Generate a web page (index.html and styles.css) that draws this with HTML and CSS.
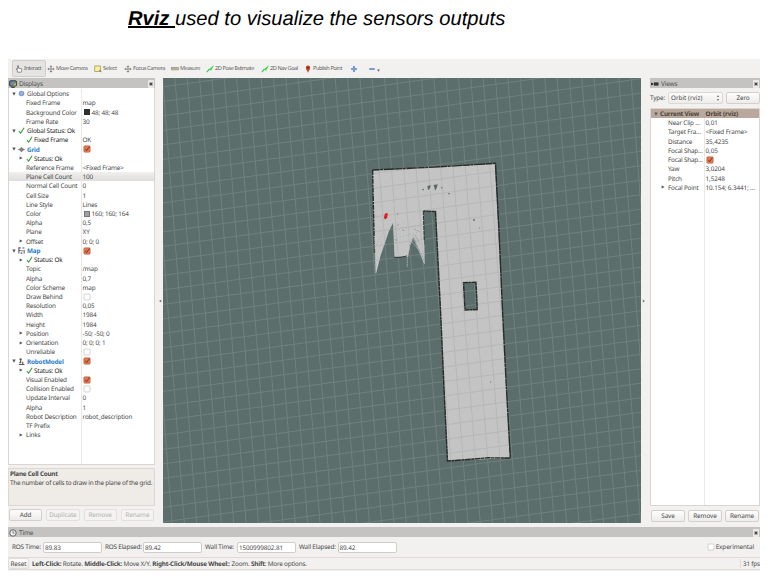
FILE: index.html
```html
<!DOCTYPE html>
<html lang="en">
<head>
<meta charset="utf-8">
<title>Rviz</title>
<link rel="stylesheet" href="styles.css">
</head>
<body>
<svg class="defs" width="0" height="0">
  <symbol id="tick" viewBox="0 0 8 8"><path d="M1 4.6 3 7 7 .8" fill="none" stroke="#2f9a35" stroke-width="1.2"/></symbol>
  <symbol id="checked" viewBox="0 0 8 8"><rect x=".8" y=".8" width="6.4" height="6.4" rx="1" fill="#e2764f" stroke="#b96a4e" stroke-width=".6"/><path d="M2.2 3.8 3.6 5.6 6.4 1.6" fill="none" stroke="#7a3a26" stroke-width="1"/></symbol>
  <symbol id="unchecked" viewBox="0 0 8 8"><rect x="1" y="1" width="6" height="6" rx="1" fill="#fff" stroke="#c4c0bc" stroke-width=".7"/></symbol>
  <symbol id="down" viewBox="0 0 4 4"><path d="M.3 .6H3.7L2 3.7z" fill="#555"/></symbol>
  <symbol id="right" viewBox="0 0 4 4"><path d="M.6 .4V3.6L3.6 2z" fill="#555"/></symbol>
  <symbol id="cross4" viewBox="0 0 10 10"><path d="M5 .3 7 2.6H3zM5 9.7 7 7.4H3zM.3 5 2.6 3V7zM9.7 5 7.4 3V7z" fill="#8a8a8a"/><path d="M5 2V8M2 5H8" stroke="#8a8a8a" stroke-width="1.2"/></symbol>
  <symbol id="arrow" viewBox="0 0 10 10"><path d="M1 9 4.2 5.2" stroke="#35c94a" stroke-width="1.3"/><path d="M3 6.2 9.4 .8 6.2 6.8 5 5.6z" fill="#2fdc48" stroke="#35c94a" stroke-width=".5"/></symbol>
  <symbol id="shut" viewBox="0 0 6 8"><rect width="6" height="8" rx="1" fill="#eceae8"/><path d="M1.6 2.6 4.4 5.4M4.4 2.6 1.6 5.4" stroke="#444" stroke-width="1.3"/></symbol>
</svg>
<h1 class="caption"><b>Rviz </b>used to visualize the sensors outputs</h1>
<main class="window">
  <nav class="toolbar">
    <span class="tool active"><svg class="ti" viewBox="0 0 10 10"><path d="M3 9V6.8L1.2 5.2 2 4.6 3.2 5.4V1H4.4V4L8.4 4.8V7.2L7.6 9z" fill="#fff" stroke="#555" stroke-width=".8"/></svg>Interact</span>
    <span class="tool t-move"><svg class="ti"><use href="#cross4"/></svg>Move Camera</span>
    <span class="tool t-select"><svg class="ti" viewBox="0 0 10 10"><rect x="1" y="1.2" width="7" height="7" fill="#f8f2a0" stroke="#8a8446" stroke-width=".8"/><path d="M6.5 6.5 9.4 8.6" stroke="#555" stroke-width="1"/></svg>Select</span>
    <span class="tool t-focus"><svg class="ti"><use href="#cross4"/></svg>Focus Camera</span>
    <span class="tool t-measure"><svg class="ti" viewBox="0 0 10 10"><rect x=".5" y="3.2" width="9" height="3" fill="#c9c09a" stroke="#8a8676" stroke-width=".7"/><path d="M2.5 3V5M4.5 3V5M6.5 3V5" stroke="#777" stroke-width=".5"/></svg>Measure</span>
    <span class="tool t-pose"><svg class="ti"><use href="#arrow"/></svg>2D Pose Estimate</span>
    <span class="tool t-nav"><svg class="ti"><use href="#arrow"/></svg>2D Nav Goal</span>
    <span class="tool t-publish"><svg class="ti" viewBox="0 0 10 10"><path d="M5 9.8C4.4 7 2.2 5.6 2.2 3.3A2.8 2.8 0 0 1 7.8 3.3C7.8 5.6 5.6 7 5 9.8z" fill="#bb4a34"/><circle cx="5" cy="3.2" r="1.1" fill="#5e2a22"/></svg>Publish Point</span>
    <span class="tool t-plus"><svg class="ti" viewBox="0 0 10 10"><path d="M5 1.6V8.4M1.6 5H8.4" stroke="#5b87c4" stroke-width="2.6"/><path d="M5 2.4V7.6M2.4 5H7.6" stroke="#8fb2e0" stroke-width="1"/></svg></span>
    <span class="tool t-minus"><svg class="ti" viewBox="0 0 10 10"><path d="M1.6 5H8.4" stroke="#5b87c4" stroke-width="2"/></svg><svg class="caret"><use href="#down"/></svg></span>
  </nav>

  <div class="middle">
    <aside class="displays">
      <header class="bar"><svg class="bi" viewBox="0 0 10 10"><rect x=".8" y="1" width="8.4" height="6.6" rx=".8" fill="#6d8d9b" stroke="#333" stroke-width="1.2"/><path d="M3 9.3H7" stroke="#333" stroke-width="1.2"/><path d="M5 6.6 8.4 3.4V6.8z" fill="#d8c544"/></svg>Displays<svg class="close"><use href="#shut"/></svg></header>
      <div class="tree">
        <div class="row"><span class="k l0"><svg class="tw"><use href="#down"/></svg><svg class="ic" viewBox="0 0 8 8"><circle cx="4" cy="4" r="3.2" fill="#7f9bd0"/><circle cx="4" cy="4" r="1.6" fill="#9db4e0"/></svg>Global Options</span><span class="v"></span></div>
        <div class="row"><span class="k l1">Fixed Frame</span><span class="v">map</span></div>
        <div class="row"><span class="k l1">Background Color</span><span class="v"><i class="swatch dark"></i>48; 48; 48</span></div>
        <div class="row"><span class="k l1">Frame Rate</span><span class="v">30</span></div>
        <div class="row dk"><span class="k l0"><svg class="tw"><use href="#down"/></svg><svg class="ic"><use href="#tick"/></svg>Global Status: Ok</span><span class="v"></span></div>
        <div class="row dk"><span class="k l1"><svg class="ic"><use href="#tick"/></svg>Fixed Frame</span><span class="v lt">OK</span></div>
        <div class="row"><span class="k l0 name"><svg class="tw"><use href="#down"/></svg><svg class="ic" viewBox="0 0 8 8"><path d="M4 1 7.6 4 4 7 .4 4z" fill="#8d8d8d"/><path d="M0 4H8M4 1.5V6.5" stroke="#777" stroke-width=".6"/></svg>Grid</span><span class="v"><svg class="cb"><use href="#checked"/></svg></span></div>
        <div class="row dk"><span class="k l1 sub"><svg class="tw"><use href="#right"/></svg><svg class="ic"><use href="#tick"/></svg>Status: Ok</span><span class="v"></span></div>
        <div class="row"><span class="k l1">Reference Frame</span><span class="v">&lt;Fixed Frame&gt;</span></div>
        <div class="row selected"><span class="k l1">Plane Cell Count</span><span class="v">100</span></div>
        <div class="row"><span class="k l1">Normal Cell Count</span><span class="v">0</span></div>
        <div class="row"><span class="k l1">Cell Size</span><span class="v">1</span></div>
        <div class="row"><span class="k l1">Line Style</span><span class="v">Lines</span></div>
        <div class="row"><span class="k l1">Color</span><span class="v"><i class="swatch grey"></i>160; 160; 164</span></div>
        <div class="row"><span class="k l1">Alpha</span><span class="v">0,5</span></div>
        <div class="row"><span class="k l1">Plane</span><span class="v">XY</span></div>
        <div class="row"><span class="k l1 sub"><svg class="tw"><use href="#right"/></svg>Offset</span><span class="v">0; 0; 0</span></div>
        <div class="row"><span class="k l0 name"><svg class="tw"><use href="#down"/></svg><svg class="ic" viewBox="0 0 8 8"><path d="M1 7.5V1H3M5 1.2H7.4M1 4H3M4.6 3.4V5M7 3.4V7.5M3 7H5" fill="none" stroke="#555" stroke-width="1.2"/></svg>Map</span><span class="v"><svg class="cb"><use href="#checked"/></svg></span></div>
        <div class="row dk"><span class="k l1 sub"><svg class="tw"><use href="#right"/></svg><svg class="ic"><use href="#tick"/></svg>Status: Ok</span><span class="v"></span></div>
        <div class="row"><span class="k l1">Topic</span><span class="v">/map</span></div>
        <div class="row"><span class="k l1">Alpha</span><span class="v">0,7</span></div>
        <div class="row"><span class="k l1">Color Scheme</span><span class="v">map</span></div>
        <div class="row"><span class="k l1">Draw Behind</span><span class="v"><svg class="cb"><use href="#unchecked"/></svg></span></div>
        <div class="row"><span class="k l1">Resolution</span><span class="v">0,05</span></div>
        <div class="row"><span class="k l1">Width</span><span class="v">1984</span></div>
        <div class="row"><span class="k l1">Height</span><span class="v">1984</span></div>
        <div class="row"><span class="k l1 sub"><svg class="tw"><use href="#right"/></svg>Position</span><span class="v">-50; -50; 0</span></div>
        <div class="row"><span class="k l1 sub"><svg class="tw"><use href="#right"/></svg>Orientation</span><span class="v">0; 0; 0; 1</span></div>
        <div class="row"><span class="k l1">Unreliable</span><span class="v"><svg class="cb"><use href="#unchecked"/></svg></span></div>
        <div class="row"><span class="k l0 name"><svg class="tw"><use href="#down"/></svg><svg class="ic" viewBox="0 0 8 8"><circle cx="3" cy="1.6" r="1.3" fill="#555"/><path d="M3 2.5V6M1 7.4H7.4M5.4 4.4V7M1.6 5.6 3 4.4" fill="none" stroke="#555" stroke-width="1.3"/></svg>RobotModel</span><span class="v"><svg class="cb"><use href="#checked"/></svg></span></div>
        <div class="row dk"><span class="k l1 sub"><svg class="tw"><use href="#right"/></svg><svg class="ic"><use href="#tick"/></svg>Status: Ok</span><span class="v"></span></div>
        <div class="row"><span class="k l1">Visual Enabled</span><span class="v"><svg class="cb"><use href="#checked"/></svg></span></div>
        <div class="row"><span class="k l1">Collision Enabled</span><span class="v"><svg class="cb"><use href="#unchecked"/></svg></span></div>
        <div class="row"><span class="k l1">Update Interval</span><span class="v">0</span></div>
        <div class="row"><span class="k l1">Alpha</span><span class="v">1</span></div>
        <div class="row"><span class="k l1">Robot Description</span><span class="v">robot_description</span></div>
        <div class="row"><span class="k l1">TF Prefix</span><span class="v"></span></div>
        <div class="row"><span class="k l1 sub"><svg class="tw"><use href="#right"/></svg>Links</span><span class="v"></span></div>
        <div class="row fill"><span class="k"></span><span class="v"></span></div>
      </div>
      <div class="help"><b>Plane Cell Count</b><p>The number of cells to draw in the plane of the grid.</p></div>
      <div class="buttons"><span class="btn">Add</span><span class="btn off">Duplicate</span><span class="btn off">Remove</span><span class="btn off">Rename</span></div>
    </aside>
    <div class="splitter"><svg viewBox="0 0 4 4"><path d="M3.2 .6V3.4L1 2z" fill="#777"/></svg></div>
    <svg class="view" viewBox="163 78 478 445" preserveAspectRatio="none">
      <defs>
        <path id="lines"/>
        <path id="area" clip-rule="evenodd" fill-rule="evenodd" d="M372.6 170 495 163.5 502 300 510 458 447.5 461 441 320 435.5 211H423.3L424.5 264.5 413.5 237 410 246 408 257H394.5L393 223 389 231 380.5 256 376 274 373.5 222zM463.5 282.6L476 282.3 477.3 309.5 465 310z"/>
        <clipPath id="floor"><use href="#area"/></clipPath>
      </defs>
      <rect x="163" y="78" width="478" height="445" fill="#5c6e6b"/>
      <use href="#lines" stroke="#6f807d" stroke-width="1"/>
      <use href="#area" fill="#c4c4c4"/>
      <g clip-path="url(#floor)"><use href="#lines" stroke="#b6b7b7" stroke-width="1"/></g>
      <g fill="none" stroke="#262a29" stroke-width="1.4">
        <path d="M372.6 170 410 168.3 447 166.4 495.5 163.3 499 232 502 300 506 380 510.3 458" stroke-dasharray="7 .5 3 .7 11 .4"/>
        <path d="M510.3 458 488 457.8 468 459.5 447.5 461 444 388 440.5 310 435.5 211.5 423.5 211" stroke-dasharray="6 .4 3 .5"/>
        <path d="M423.3 211 424.3 240" stroke-dasharray="4 1" stroke-width=".9"/>
        <path d="M372.6 170 373.7 220 374.5 253" stroke-dasharray="5 1 2 .7"/>
        <path d="M463.5 282.6 476 282.3 477.3 309.5 465 310z" stroke-dasharray="5 .4 2 .5"/>
        <path d="M394 257.4 401 257.2 407 256" stroke-width=".9"/>
      </g>
      <path d="M374.5 236 375.7 273M376.5 268 380 254M407.3 256V267M413 237 424.6 264M412 242 418 249M424.3 245V262" fill="none" stroke="#bfc4c3" stroke-width=".7" stroke-dasharray="1.5 .5"/>
      <path d="M376 245 384 232M409.5 246 413 234 421 255M395 226V252M396 230 420 226M397 238 418 232" fill="none" stroke="#828b89" stroke-width=".6" stroke-dasharray=".7 2.6"/>
      <path d="M412.5 238 417 243M415 235 420 244M417 245 424 261M414 229 420 232M397 225H399M397.7 213V215M402 230 405 231M395 240H397" fill="none" stroke="#8b9391" stroke-width=".8" stroke-dasharray="2 1"/>
      <g fill="#5c6765"><path d="M427.3 186 430.8 185.3 429.8 188.5 428.2 190.2zM433.5 185 437.7 184.3 436.7 188 435 190.7 434.3 187z"/><circle cx="423" cy="189.6" r=".8"/><circle cx="441.8" cy="187.7" r=".7"/><circle cx="449" cy="193.7" r=".8"/><circle cx="474" cy="220" r=".9"/><circle cx="479.3" cy="228" r=".5"/><circle cx="490.5" cy="382" r=".6"/></g>
      <path d="M385 213.5 387.7 213 387.3 217.5 385.4 219.5 383.8 218z" fill="#e31b20"/>
    </svg>
    <div class="splitter rs"><svg viewBox="0 0 4 4"><path d="M.8 .6V3.4L3 2z" fill="#777"/></svg></div>
    <aside class="views">
      <header class="bar"><svg class="bi" viewBox="0 0 10 10"><rect x="3.6" y="3" width="5.8" height="4" fill="#333"/><path d="M0 3 3 4.4V5.6L0 7z" fill="#333"/></svg>Views<svg class="close"><use href="#shut"/></svg></header>
      <div class="type"><span>Type:</span><span class="select">Orbit (rviz)<svg viewBox="0 0 4 8"><path d="M.8 3 2 1 3.2 3zM.8 5 2 7 3.2 5z" fill="#777"/></svg></span><span class="btn">Zero</span></div>
      <div class="tree">
        <div class="row head"><span class="k"><svg class="tw"><use href="#down"/></svg>Current View</span><span class="v">Orbit (rviz)</span></div>
        <div class="row"><span class="k l1">Near Clip ...</span><span class="v">0,01</span></div>
        <div class="row"><span class="k l1">Target Fra...</span><span class="v">&lt;Fixed Frame&gt;</span></div>
        <div class="row"><span class="k l1">Distance</span><span class="v">35,4235</span></div>
        <div class="row"><span class="k l1">Focal Shap...</span><span class="v">0,05</span></div>
        <div class="row"><span class="k l1">Focal Shap...</span><span class="v"><svg class="cb"><use href="#checked"/></svg></span></div>
        <div class="row"><span class="k l1">Yaw</span><span class="v">3,0204</span></div>
        <div class="row"><span class="k l1">Pitch</span><span class="v">1,5248</span></div>
        <div class="row"><span class="k l1 sub"><svg class="tw"><use href="#right"/></svg>Focal Point</span><span class="v">10.154; 6.3441; ...</span></div>
        <div class="row fill"><span class="k"></span><span class="v"></span></div>
      </div>
      <div class="buttons"><span class="btn">Save</span><span class="btn">Remove</span><span class="btn">Rename</span></div>
    </aside>
  </div>

  <section class="time">
    <header class="bar"><svg class="bi" viewBox="0 0 10 10"><circle cx="5" cy="5" r="4" fill="#f4f4f4" stroke="#444" stroke-width="1"/><path d="M5 2.4V5.2H7.2" fill="none" stroke="#444" stroke-width=".8"/></svg>Time<svg class="close"><use href="#shut"/></svg></header>
    <div class="clocks">
      <label class="c1">ROS Time:</label><span class="field">89.83</span>
      <label class="c2">ROS Elapsed:</label><span class="field">89.42</span>
      <label class="c3">Wall Time:</label><span class="field">1500999802.81</span>
      <label class="c4">Wall Elapsed:</label><span class="field">89.42</span>
      <span class="exp"><svg class="cb"><use href="#unchecked"/></svg>Experimental</span>
    </div>
  </section>
  <footer class="status"><span class="btn">Reset</span><p><b>Left-Click:</b> Rotate. <b>Middle-Click:</b> Move X/Y. <b>Right-Click/Mouse Wheel:</b>: Zoom. <b>Shift</b>: More options.</p><span class="fps">31 fps</span></footer>
</main>
<script src="grid.js"></script>
</body>
</html>
```
FILE: styles.css
```css
* { box-sizing: border-box; }
body {
  margin: 0;
  width: 770px;
  height: 576px;
  overflow: hidden;
  background: #fff;
  font: 6.35px/9.22px "Noto Sans", "Open Sans", sans-serif;
  letter-spacing: -.18px;
  color: #484848;
  text-rendering: geometricPrecision;
}
p { margin: 0; }
i { font-style: normal; }
svg { display: block; flex: none; }
.defs { position: absolute; }

.caption {
  margin: 0;
  height: 59px;
  padding: 8px 0 0 128px;
  font: italic 20.15px/23px "Liberation Sans", Arial, sans-serif;
  letter-spacing: 0;
  color: #000;
  white-space: pre;
}
.caption b { text-decoration: underline; text-decoration-thickness: 2px; }

.window {
  width: 752px;
  height: 512px;
  margin-left: 8px;
  display: flex;
  flex-direction: column;
  background: #f2f1f0;
}

.toolbar { height: 19px; display: flex; align-items: center; padding-left: 4px; color: #5c5c5c; font-size: 5.6px; letter-spacing: -.42px; }
.tool { flex: none; display: flex; align-items: center; gap: 1px; height: 17px; padding-top: 1px; white-space: nowrap; }
.tool.active { width: 34px; padding-left: 2px; background: #e6e4e2; border: 1px solid #cfccc9; border-radius: 2px; }
.ti { width: 8px; height: 8px; }
.t-move { width: 46px; margin-left: 1px; }
.t-select { width: 30px; margin-left: 1px; letter-spacing: -.3px; }
.t-focus { width: 47px; }
.t-measure { width: 35px; }
.t-pose { width: 55px; }
.t-nav { width: 43px; }
.t-publish { width: 46px; }
.t-plus { width: 18px; }
.caret { width: 3px; height: 3px; margin-top: 3px; }

.middle { display: flex; height: 445px; }
.displays { width: 147px; display: flex; flex-direction: column; }
.bar {
  height: 10px;
  flex: none;
  display: flex;
  align-items: center;
  gap: 2px;
  padding: 1px 1px 0;
  background: #c5c3c2;
  color: #505050;
  font-size: 6.5px;
}
.bi { width: 8px; height: 8px; }
.close { margin-left: auto; width: 6px; height: 8px; }

.tree { background: #fff; border: 1px solid #d9d5d1; border-top: 0; display: flex; flex-direction: column; }
.displays .tree { height: 377px; padding-top: 1.2px; }
.row { height: 9.22px; flex: none; display: flex; white-space: nowrap; }
.row.fill { flex: 1; }
.k { width: 73px; padding-left: 17px; display: flex; align-items: center; border-right: 1px solid #ebe9e7; }
.v { flex: 1; padding-left: .6px; display: flex; align-items: center; overflow: hidden; }
.l0 { padding-left: 3px; }
.sub { padding-left: 10px; }
.sub .tw { margin-right: 3px; }
.tw { width: 4px; height: 4px; margin-right: 2px; }
.ic { width: 7px; height: 7px; margin-right: 2px; }
.l1 .ic { margin-right: 1px; }
.dk { color: #1e1e1e; }
.lt { color: #4c4c4c; }
.name { color: #2a7cc9; font-weight: bold; }
.cb { width: 8px; height: 8px; }
.selected { background: linear-gradient(#f1f0ef, #dfdddb); }
.swatch { width: 6px; height: 6px; margin: 0 2px 0 1px; }
.dark { background: #303030; }
.grey { background: #a0a0a4; border: .5px solid #777; }

.help { height: 38px; margin-top: 3px; padding: 1px 1px; background: #efebe7; border: 1px solid #dcd8d3; white-space: nowrap; line-height: 8.6px; letter-spacing: -.235px; }
.help b { display: block; }
.buttons { display: flex; gap: 4px; padding: 3px 1px 0; }
.btn {
  flex: 1;
  height: 12px;
  display: flex;
  align-items: center;
  justify-content: center;
  background: linear-gradient(#fdfdfd, #eeecea);
  border: 1px solid #d2cfcc;
  border-radius: 2px;
  letter-spacing: -.08px;
}
.btn.off { color: #b3b0ad; background: #f4f3f2; border-color: #e3e0de; }

.splitter { width: 8px; display: flex; align-items: center; justify-content: flex-end; padding-right: 1px; }
.splitter svg { width: 4px; height: 4px; }
.splitter.rs { width: 9px; justify-content: flex-start; padding: 0 0 0 1px; }
.view { width: 478px; height: 445px; overflow: hidden; }

.views { width: 110px; display: flex; flex-direction: column; }
.type { display: flex; align-items: center; height: 20px; }
.type > span:first-child { width: 18px; }
.select { width: 55px; height: 12px; padding: 0 2px; display: flex; align-items: center; justify-content: space-between; background: linear-gradient(#fdfdfd, #eeecea); border: 1px solid #dbd8d5; border-radius: 2px; letter-spacing: 0; }
.select svg { width: 4px; height: 8px; }
.type .btn { margin-left: 3px; }
.views .tree { height: 398px; border-top: 1px solid #d9d5d1; }
.views .k { width: 54px; }
.views .v { letter-spacing: -.12px; }
.views .l1 { padding-left: 17px; }
.views .sub { padding-left: 10px; }
.views .head { background: #b9a89b; color: #4b3f38; font-weight: bold; }
.views .head .k { padding-left: 3px; border-color: transparent; }
.views .buttons { gap: 3px; padding-top: 4px; }

.time { margin-top: 4px; }
.clocks { height: 20px; display: flex; align-items: center; padding: 0 6px 0 4px; }
.clocks label { white-space: nowrap; }
.c1 { width: 31px; }
.c2 { width: 38px; }
.c3 { width: 32px; }
.c4 { width: 38.5px; }
.field { width: 59px; height: 11px; margin-right: 3px; padding-left: 1px; background: #fff; border: 1px solid #cfccc9; border-radius: 2px; letter-spacing: -.1px; }
.exp { margin-left: auto; display: flex; align-items: center; gap: 1px; letter-spacing: -.1px; }
.status { height: 13px; display: flex; align-items: center; border-top: 1px solid #dedbd8; border-bottom: 1px solid #dedbd8; }
.status .btn { flex: none; width: 21px; height: 11px; border-color: #e0dddb; }
.status p { margin-left: 3px; white-space: nowrap; letter-spacing: -.19px; }
.fps { margin-left: auto; width: 20px; padding-left: 2px; border-left: 1px solid #dedbd8; white-space: nowrap; }
```
FILE: grid.js
```js
// Ground-plane grid: an origin crossing and the two cell edge vectors.
const origin = [190.96, 126.5];
const across = [12.2, -1.69];
const down = [1.1, 14.35];
const point = (i, j) =>
  (origin[0] + i * across[0] + j * down[0]).toFixed(2) + ' ' +
  (origin[1] + i * across[1] + j * down[1]).toFixed(2);

let d = '';
for (let i = -8; i <= 42; i++) d += `M${point(i, -12)}L${point(i, 36)}`;
for (let j = -10; j <= 36; j++) d += `M${point(-8, j)}L${point(42, j)}`;
document.getElementById('lines').setAttribute('d', d);
```
